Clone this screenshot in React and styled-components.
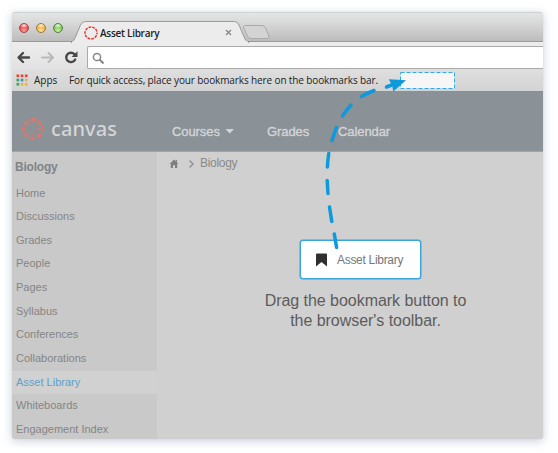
import React from "react";
import styled, { createGlobalStyle, css } from "styled-components";

const Global = createGlobalStyle`
  * { box-sizing: border-box; }
  body { margin: 0; background: #fff; overflow: hidden; }
`;

const Stage = styled.div`
  position: relative;
  width: 558px;
  height: 453px;
  padding: 12px 15px 15px 12px;
  background: #fff;
  font-family: "Liberation Sans", Arial, sans-serif;
  white-space: nowrap;
`;

const Window = styled.div`
  width: 531px;
  height: 427px;
  display: flex;
  flex-direction: column;
  border-radius: 4px;
  overflow: hidden;
  background: #d0d0d0;
  box-shadow: 0 0 1px 0 rgba(170, 182, 198, 0.7), 0 2px 9px 1px rgba(130, 145, 170, 0.36);
`;

const TabStrip = styled.div`
  height: 30px;
  flex: none;
  display: flex;
  background: linear-gradient(#e4e5e5, #d2d2d2 50%, #bcbcbc);
  border-top: 1px solid #cfd4d8;
  border-bottom: 1px solid #999;
`;

const Lights = styled.div`
  display: flex;
  gap: 7px;
  padding: 10px 0 0 7px;
  width: 59px;
  flex: none;
`;

const Light = styled.i`
  width: 10px;
  height: 10px;
  flex: none;
  border-radius: 50%;
  border: 1px solid ${(p) => p.$edge};
  background: radial-gradient(ellipse 60% 35% at 50% 15%, rgba(255, 255, 255, 0.9), rgba(255, 255, 255, 0) 100%),
    radial-gradient(circle at 50% 85%, ${(p) => p.$glow}, ${(p) => p.$color} 75%);
`;

const Tab = styled.div`
  position: relative;
  width: 178px;
  height: 29px;
  flex: none;
  display: flex;
  align-items: flex-start;
  padding: 0 17px 0 13px;
`;

const TabShape = styled.svg`
  position: absolute;
  left: 0;
  top: 0;
`;

const Favicon = styled.svg`
  z-index: 1;
  flex: none;
  margin-top: 13px;
`;

const TabTitle = styled.span`
  z-index: 1;
  flex: 1;
  padding: 13px 0 0 2px;
  font: 600 10px/14px "Open Sans", sans-serif;
  letter-spacing: -0.28px;
  color: #222;
`;

const TabClose = styled.svg`
  z-index: 1;
  margin-top: 16px;
`;

const NewTab = styled.svg`
  flex: none;
  margin: 11px 0 0 -7px;
`;

const Toolbar = styled.div`
  height: 27px;
  flex: none;
  display: flex;
  align-items: center;
  background: linear-gradient(#ededed, #e2e2e2);
`;

const NavIcons = styled.svg`
  flex: none;
  width: 75px;
  height: 27px;
`;

const AddressBar = styled.div`
  flex: 1;
  height: 23px;
  margin-top: 4px;
  background: #fff;
  border: 1px solid #aaa;
  border-right: 0;
  border-radius: 2px 0 0 2px;
  padding: 4px 0 0 4px;
`;

const Bookmarks = styled.div`
  height: 23px;
  flex: none;
  display: flex;
  align-items: center;
  padding: 0 0 0 4px;
  background: linear-gradient(#dfdfdf, #d3d3d3);
  border-bottom: 1px solid #8d8f91;
  font: 500 10px/14px "Open Sans", sans-serif;
  color: #222;
`;

const AppGrid = styled.svg`
  flex: none;
`;

const AppsLabel = styled.span`
  width: 35px;
  margin-left: 6px;
`;

const BookmarkHint = styled.span`
  width: 330px;
  letter-spacing: -0.12px;
`;

const DropTarget = styled.svg`
  flex: none;
`;

const Header = styled.header`
  height: 60px;
  flex: none;
  display: flex;
  background: #8a9197;
  border-bottom: 1px solid #a0a5a9;
`;

const Logo = styled.div`
  width: 160px;
  display: flex;
  padding: 26px 0 0 10px;
`;

const Wordmark = styled.span`
  margin: -3px 0 0 7px;
  font: 500 20px/28px "Noto Sans", sans-serif;
  letter-spacing: 0.1px;
  color: #d3d6d8;
`;

const NavItem = styled.a`
  width: ${(p) => p.$w}px;
  padding-top: 31px;
  display: flex;
  gap: 5px;
  font-size: 13px;
  line-height: 17px;
  letter-spacing: -0.08px;
  color: #d3d5d7;
  -webkit-text-stroke: 0.35px #d3d5d7;
`;

const Main = styled.div`
  flex: 1;
  min-height: 0;
  display: flex;
`;

const Sidebar = styled.nav`
  width: 145px;
  flex: none;
  background: #c9c9c9;
`;

const CourseTitle = styled.div`
  padding: 7px 0 0 3px;
  height: 29.5px;
  font-size: 12px;
  line-height: 16px;
  font-weight: bold;
  letter-spacing: -0.2px;
  color: #7f8487;
`;

const SideItem = styled.a`
  display: block;
  height: 23.65px;
  padding-left: 4px;
  font-size: 11px;
  line-height: 23.65px;
  color: #858585;
  ${(p) =>
    p.$active &&
    css`
      background: #d1d1d1;
      color: #61a0c7;
    `}
`;

const Content = styled.main`
  flex: 1;
  display: flex;
  flex-direction: column;
`;

const Crumbs = styled.div`
  height: 24px;
  display: flex;
  padding: 4px 0 0 12px;
  font-size: 12px;
  line-height: 15px;
  letter-spacing: -0.3px;
  color: #8a8a8a;
`;

const CrumbIcons = styled.svg`
  flex: none;
  width: 31px;
  height: 16px;
`;

const DragArea = styled.section`
  width: 240px;
  margin: 64px 0 0 88px;
  display: flex;
  flex-direction: column;
  align-items: center;
`;

const AssetButton = styled.div`
  width: 121px;
  height: 39px;
  margin-right: 9px;
  display: flex;
  align-items: center;
  gap: 10px;
  padding-left: 15px;
  background: #fff;
  border: 1.5px solid #38a5df;
  border-radius: 3px;
  box-shadow: 0 0 0 0.5px #38a5df;
  font-size: 12px;
  letter-spacing: -0.3px;
  color: #777;
`;

const Instruction = styled.p`
  margin: 12px 0 0 1px;
  text-align: center;
  font-size: 16px;
  line-height: 20px;
  letter-spacing: -0.04px;
  color: #5c5c5c;
`;

const DragArrow = styled.svg`
  position: absolute;
  left: 0;
  top: 0;
  pointer-events: none;
`;

const items = [
  "Home",
  "Discussions",
  "Grades",
  "People",
  "Pages",
  "Syllabus",
  "Conferences",
  "Collaborations",
  "Asset Library",
  "Whiteboards",
  "Engagement Index",
];

const appColors = ["#e5443b", "#e5443b", "#e5443b", "#3da35d", "#3f8ae0", "#e9b62f", "#3da35d", "#edb52c", "#edb52c"];

function CanvasMark() {
  return (
    <svg width="22" height="22" viewBox="-11 -11 22 22">
      {[0, 45, 90, 135, 180, 225, 270, 315].map((a) => (
        <g key={a} transform={`rotate(${a})`} fill="#d9786e">
          <path d="M-3.2-10.4A11 11 0 0 1 3.2-10.4Q2.6-7.6 0-7.4Q-2.6-7.6-3.2-10.4Z" />
          <circle cy="-5.4" r="0.8" />
        </g>
      ))}
    </svg>
  );
}

export default function App() {
  return (
    <Stage>
      <Global />
      <Window>
        <TabStrip>
          <Lights>
            <Light $edge="#9f4545" $color="#df3b3d" $glow="#ff9c94" />
            <Light $edge="#a17a35" $color="#e9a32f" $glow="#ffe293" />
            <Light $edge="#548044" $color="#6fb84c" $glow="#c5f59c" />
          </Lights>
          <Tab>
            <TabShape width="178" height="30" viewBox="0 0 178 30">
              <path
                d="M0 29.500Q3 28 4 25L9.500 12Q11 8.500 14.500 8.500H163.500Q166.500 8.500 168 12L173.500 25Q174.500 28 178 29.500Z"
                fill="#ececec"
                stroke="#999"
              />
              <path d="M1 29.500H177" stroke="#ededed" strokeWidth="2" />
            </TabShape>
            <Favicon width="14" height="14" viewBox="0 0 14 14">
              <circle
                cx="7"
                cy="7"
                r="6"
                fill="none"
                stroke="#e63a31"
                strokeWidth="1.500"
                strokeDasharray="2.720 1.050"
                strokeDashoffset="1.360"
              />
            </Favicon>
            <TabTitle>Asset Library</TabTitle>
            <TabClose width="7" height="7" viewBox="0 0 7 7">
              <path d="M1 1L6 6M6 1L1 6" stroke="#888" strokeWidth="1.300" />
            </TabClose>
          </Tab>
          <NewTab width="30" height="16" viewBox="0 0 30 16">
            <path
              d="M2.500 1.500H20Q22.500 1.500 23.500 4L27 12Q27.500 14.500 25 14.500H9Q6.500 14.500 5.500 12L1.500 4Q1 2 2.500 1.500Z"
              fill="#d3d3d3"
              stroke="#aaa"
            />
          </NewTab>
        </TabStrip>
        <Toolbar>
          <NavIcons viewBox="0 0 75 27" fill="none" strokeWidth="2.400" strokeLinecap="round" strokeLinejoin="round">
            <path d="M17 15.500H7.500M11 11L6.500 15.500L11 20" stroke="#484848" />
            <path d="M30 15.500H40M36.500 11L41 15.500L36.500 20" stroke="#b9b9b9" strokeWidth="2" />
            <path d="M62.500 12.300A4.700 4.700 0 1 0 63.200 17.500" stroke="#484848" />
            <path d="M65.500 9.300V15H59.500Z" fill="#484848" />
          </NavIcons>
          <AddressBar>
            <svg width="13" height="13" viewBox="0 0 13 13" fill="none" stroke="#858585">
              <circle cx="5" cy="5" r="3.600" strokeWidth="1.500" />
              <path d="M7.800 7.800L11.500 11.500" strokeWidth="2" />
            </svg>
          </AddressBar>
        </Toolbar>
        <Bookmarks>
          <AppGrid width="12" height="12" viewBox="0 0 12 12">
            {appColors.map((c, i) => (
              <rect key={i} x={0.5 + (i % 3) * 4.2} y={0.5 + Math.floor(i / 3) * 4.2} width="2.700" height="2.700" fill={c} />
            ))}
          </AppGrid>
          <AppsLabel>Apps</AppsLabel>
          <BookmarkHint>For quick access, place your bookmarks here on the bookmarks bar.</BookmarkHint>
          <DropTarget width="57" height="18" viewBox="0 0 57 18">
            <rect x="1.500" y="1.500" width="54" height="16" fill="#f6f6f6" stroke="#35a9e1" strokeDasharray="4 2" />
          </DropTarget>
        </Bookmarks>
        <Header>
          <Logo>
            <CanvasMark />
            <Wordmark>canvas</Wordmark>
          </Logo>
          <NavItem $w={95}>
            Courses
            <svg width="10" height="16" viewBox="0 0 10 16">
              <path d="M0.500 6H9L4.750 10.500Z" fill="#d3d5d7" />
            </svg>
          </NavItem>
          <NavItem $w={71}>Grades</NavItem>
          <NavItem $w={70}>Calendar</NavItem>
        </Header>
        <Main>
          <Sidebar>
            <CourseTitle>Biology</CourseTitle>
            {items.map((label) => (
              <SideItem key={label} $active={label === "Asset Library"}>
                {label}
              </SideItem>
            ))}
          </Sidebar>
          <Content>
            <Crumbs>
              <CrumbIcons viewBox="0 0 31 16">
                <path d="M0.500 8L5 3.500L6.800 5.200V4H8V6.400L9.500 8H8.200V12H6V9.200H4V12H1.800V8Z" fill="#808080" />
                <path d="M20.500 4.500L24 8L20.500 11.500" fill="none" stroke="#929292" strokeWidth="1.500" />
              </CrumbIcons>
              Biology
            </Crumbs>
            <DragArea>
              <AssetButton>
                <svg width="11" height="14" viewBox="0 0 11 14">
                  <path d="M0 1.500Q0 0.500 1 0.500H10Q11 0.500 11 1.500V13.500L5.500 9L0 13.500Z" fill="#303030" />
                </svg>
                Asset Library
              </AssetButton>
              <Instruction>
                Drag the bookmark button to
                <br />
                the browser's toolbar.
              </Instruction>
            </DragArea>
          </Content>
        </Main>
      </Window>
      <DragArrow width="558" height="453" viewBox="0 0 558 453">
        <path
          d="M336.600 247.500L334.300 234M331.800 221.500L329.500 207M328 193.500L327.200 180.500M327.400 167Q327.800 159 328.800 153.500M332 140.500Q333.800 134 336.500 127.500M342.500 116Q346 110.500 351 105M361.500 96.500Q367.500 93 374 90.500M386.500 87L393 84.500"
          fill="none"
          stroke="#0d9add"
          strokeWidth="3.500"
          strokeLinecap="round"
        />
        <path d="M406 80.200L388.800 79.200L392 85L393.300 91.500Z" fill="#0d9add" />
      </DragArrow>
    </Stage>
  );
}
